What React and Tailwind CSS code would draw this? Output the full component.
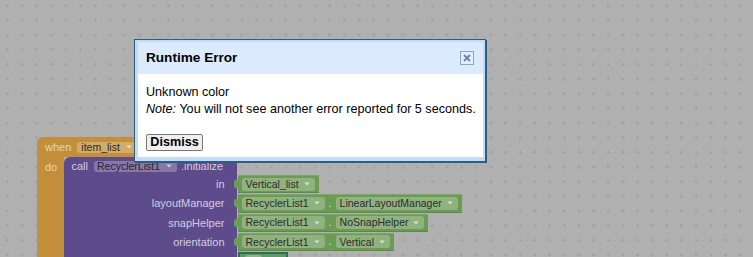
import React from "react";

function Arrow({ color = "rgba(235,240,230,0.75)" }) {
  return (
    <svg width="6" height="4" viewBox="0 0 6 4" className="shrink-0">
      <path d="M0.3 0.5 L5.7 0.5 L3 3.6 Z" fill={color} />
    </svg>
  );
}

function GField({ text }) {
  return (
    <div className="flex h-[13px] items-center gap-[5px] rounded-[3px] bg-[#90b27f] pl-[4px] pr-[5px] text-[10.5px] leading-none text-[#2c2c2c]">
      <span>{text}</span>
      <Arrow />
    </div>
  );
}

function GreenBlock({ fields }) {
  return (
    <div className="relative flex h-[18.25px] items-center gap-[4px] bg-[#6c9b56] pl-[3.5px] pr-[4px] shadow-[inset_0_1px_0_rgba(255,255,255,0.12),inset_0_-1px_0_rgba(0,0,0,0.12)]">
      <div className="absolute left-[-4.5px] top-[5px] h-[8px] w-[5px] rounded-l-[2px] bg-[#6c9b56]" />
      {fields.map((f, i) => (
        <React.Fragment key={i}>
          {i > 0 && <span className="text-[11px] leading-none text-[#d7e3d0]">.</span>}
          <GField text={f} />
        </React.Fragment>
      ))}
    </div>
  );
}

const rows = [
  { label: "in", fields: ["Vertical_list"] },
  { label: "layoutManager", fields: ["RecyclerList1", "LinearLayoutManager"] },
  { label: "snapHelper", fields: ["RecyclerList1", "NoSnapHelper"] },
  { label: "orientation", fields: ["RecyclerList1", "Vertical"] },
];

export default function App() {
  return (
    <div className="relative h-[257px] w-[753px] overflow-hidden bg-[#b0b0b0] bg-[radial-gradient(circle_at_center,#a0a0a0_1px,transparent_1.6px)] bg-[length:14.67px_14.67px] bg-[position:0px_-1.6px] font-['Liberation_Sans',Arial,sans-serif]">
      {/* Blockly event block (free canvas) */}
      <div className="absolute left-[37px] top-[137px] flex flex-col">
        <div className="flex h-[20px] w-[240px] items-center gap-[6px] rounded-tl-[6px] bg-[#c48f3a] pl-[8px] text-[11px] leading-none text-[#e4d5bc]">
          <span>when</span>
          <div className="flex h-[11px] items-center gap-[6px] rounded-[3px] bg-[#d1ab6c] pl-[4px] pr-[5px] text-[10.5px] text-[#2f2a22]">
            <span>item_list</span>
            <Arrow color="rgba(245,235,215,0.8)" />
          </div>
        </div>
        <div className="flex">
          <div className="h-[110px] w-[27px] bg-[#c48f3a] pl-[8px] pt-[5px] text-[11px] leading-none text-[#e4d5bc]">
            do
          </div>
          <div className="flex flex-col">
            <div className="flex h-[18px] w-[173px] items-center gap-[6px] rounded-tl-[6px] bg-[#5e4b8b] pl-[7.5px] text-[11px] leading-none text-[#d2cce0]">
              <span>call</span>
              <div className="flex h-[11px] items-center gap-[6px] rounded-[3px] bg-[#8878a8] pl-[3px] pr-[5px] text-[10.5px] text-[#252232]">
                <span>RecyclerList1</span>
                <Arrow color="rgba(225,220,240,0.8)" />
              </div>
              <span className="-ml-[2px]">.initialize</span>
            </div>
            {rows.map((r) => (
              <div key={r.label} className="flex h-[19.25px] items-start">
                <div className="flex h-full w-[173px] items-center justify-end bg-[#5e4b8b] pr-[12.5px] text-[11px] leading-none text-[#d2cce0]">
                  {r.label}
                </div>
                <div className="pl-[1px]">
                  <GreenBlock fields={r.fields} />
                </div>
              </div>
            ))}
            <div className="flex h-[20px] items-start">
              <div className="h-full w-[173px] bg-[#5e4b8b]" />
              <div className="ml-[1px] flex h-[20px] w-[50px] items-start border-2 border-[#2f6f4c] bg-[#5a9a66] pl-[5px] pt-[1px]">
                <div className="flex h-[13px] items-center rounded-[3px] bg-[#8fb28a] px-[3px] text-[10.5px] leading-none text-[#2c2c2c]">
                  fal
                </div>
              </div>
            </div>
          </div>
        </div>
      </div>

      {/* Runtime error dialog */}
      <div className="absolute left-[134px] top-[39px] flex h-[123px] w-[352px] flex-col border border-[#2e5d80] bg-[#c4dbf5] pb-[4px] pl-[3px] pr-[2px] pt-[2px] shadow-[1px_1px_0_#2e5d80]">
        <div className="flex h-[32px] shrink-0 items-center justify-between bg-[#dbeafc] pl-[8px] pr-[9px]">
          <span className="text-[13.6px] font-bold text-black">Runtime Error</span>
          <div className="flex h-[14px] w-[14px] items-center justify-center border border-[#8aa6c8] bg-[#e4eefb]">
            <svg width="10" height="10" viewBox="0 0 10 10">
              <path d="M2 2 L8 8 M8 2 L2 8" stroke="#6687b3" strokeWidth="2" />
            </svg>
          </div>
        </div>
        <div className="flex min-h-0 flex-1 flex-col items-start whitespace-nowrap bg-white pl-[8px] pt-[10px] text-[12.6px] leading-[16.5px] text-black">
          <div>Unknown color</div>
          <div>
            <i>Note:</i> You will not see another error reported for 5 seconds.
          </div>
          <button className="mt-[17px] flex h-[17px] w-[57px] shrink-0 items-center justify-center rounded-[2px] border border-[#767676] bg-[#efefef] text-[12.6px] font-bold leading-none text-black">
            Dismiss
          </button>
        </div>
      </div>
    </div>
  );
}
